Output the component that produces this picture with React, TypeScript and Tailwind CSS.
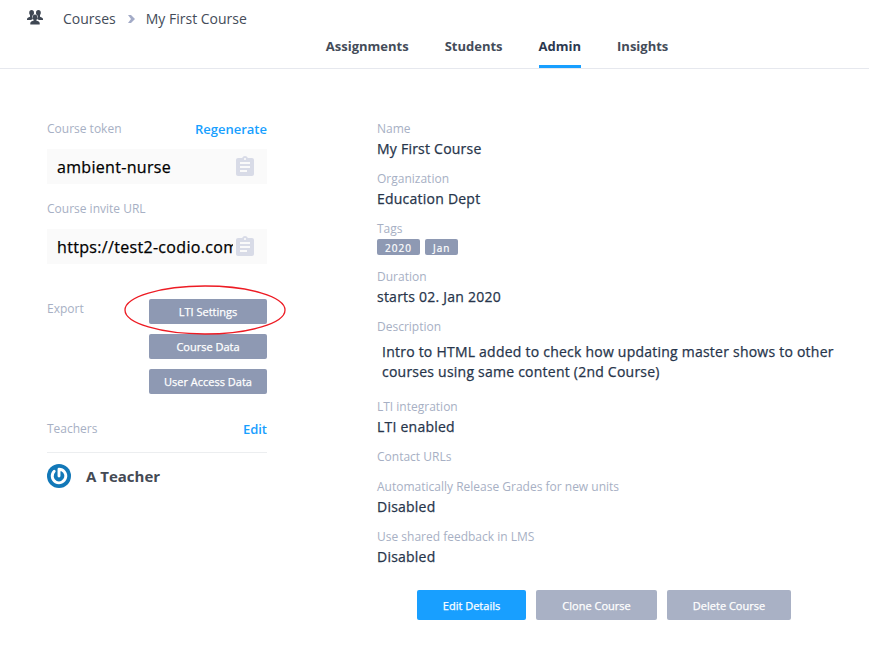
import type { ReactNode } from 'react';
import { MdAssignment } from 'react-icons/md';

const tabs = ['Assignments', 'Students', 'Admin', 'Insights'];

function PeopleIcon() {
  return (
    <svg width="16" height="15" viewBox="0 0 16 15" fill="#3f4753" className="block">
      <ellipse cx="4.6" cy="2.8" rx="2.4" ry="2.700" />
      <ellipse cx="11.4" cy="2.8" rx="2.4" ry="2.700" />
      <path d="M0 10V8.800Q.2 7.500 3 6.700V5h2.600Q4.500 7.500 6 9L4 10Z" />
      <path d="M16 10V8.800q-.2-1.300-3-2.100V5h-2.600q1.100 2.500-.4 4L12 10Z" />
      <ellipse cx="8" cy="7.300" rx="2.300" ry="2.900" />
      <path d="M6.700 8.500h2.600v2q3.200.8 3.400 2.300V14.500H3.300v-1.700q.2-1.500 3.400-2.300Z" />
    </svg>
  );
}

function CopyField({ value }: { value: string }) {
  return (
    <div className="flex h-[35px] w-[220px] items-center bg-[#fafafa] pl-2.5">
      <span className="w-[176px] shrink-0 overflow-hidden whitespace-nowrap text-[16px] leading-6 tracking-[0.32px] text-black [-webkit-text-stroke:0.25px]">{value}</span>
      <MdAssignment className="shrink-0 text-[#d8dbe7]" size={24} />
    </div>
  );
}

function Label({ children }: { children: ReactNode }) {
  return <div className="text-[12px] leading-5 text-[#a7b0c4]">{children}</div>;
}

function Field({ label, children }: { label: string; children?: ReactNode }) {
  return (
    <div className="mb-2.5">
      <Label>{label}</Label>
      {children && <div className="text-[14px] leading-5 tracking-[0.23px] text-[#27354b] [-webkit-text-stroke:0.25px]">{children}</div>}
    </div>
  );
}

export default function App() {
  return (
    <div className="h-[669px] w-[869px] overflow-hidden bg-white font-['Open_Sans',sans-serif]">
      <header className="flex h-[69px] flex-col border-b border-[#e6e8ee]">
        <div className="flex h-9 items-center pl-[27px] text-[14px] text-[#444c59]">
          <div className="-mt-0.5"><PeopleIcon /></div>
          <span className="ml-5">Courses</span>
          <svg width="7" height="8" viewBox="0 0 7 8" className="ml-3 mr-[11px] mt-0.5" fill="#a3abc7">
            <path d="M0 0h3l4 4-4 4H0l3-4Z" />
          </svg>
          <span>My First Course</span>
        </div>
        <nav className="flex h-8 gap-9 pl-[325.8px] text-[13px] font-bold leading-5 text-[#444c59]">
          {tabs.map((tab) => (
            <div key={tab} className={tab === 'Admin' ? 'h-8 border-b-3 border-[#189fff] text-[#2b3850]' : 'h-8'}>{tab}</div>
          ))}
        </nav>
      </header>

      <main className="flex pl-[47px] pt-[50px]">
        <section className="w-[220px] shrink-0">
          <div className="flex justify-between">
            <Label>Course token</Label>
            <span className="text-[13px] font-semibold leading-5 text-[#189fff]">Regenerate</span>
          </div>
          <div className="mt-2.5"><CopyField value="ambient-nurse" /></div>
          <div className="mb-2.5 mt-[15px]"><Label>Course invite URL</Label></div>
          <CopyField value="https://test2-codio.com" />
          <div className="mt-[35px] flex justify-between">
            <Label>Export</Label>
            <div className="relative flex w-[118px] flex-col gap-2.5">
              {['LTI Settings', 'Course Data', 'User Access Data'].map((text) => (
                <button key={text} className="h-[25px] rounded-[2px] bg-[#8e99b3] pt-0.5 text-[11px] text-white [-webkit-text-stroke:0.25px]">{text}</button>
              ))}
              <svg className="pointer-events-none absolute -left-[25px] -top-[14px]" width="162" height="50" viewBox="0 0 162 50" fill="none">
                <ellipse cx="81" cy="25" rx="80" ry="24" stroke="#ed1c24" strokeWidth="1.300" />
              </svg>
            </div>
          </div>
          <div className="mt-[25px] flex h-[34px] justify-between border-b border-[#eceef0]">
            <Label>Teachers</Label>
            <span className="text-[13px] font-semibold leading-5 text-[#189fff]">Edit</span>
          </div>
          <div className="mt-[11px] flex items-center">
            <svg width="24" height="24" viewBox="0 0 24 24" fill="none">
              <circle cx="12" cy="12" r="12" fill="#1278b8" />
              <path d="M7.200 7.200A6.800 6.800 0 1 0 12 5.200V12" stroke="white" strokeWidth="2.900" strokeLinecap="round" strokeLinejoin="round" />
            </svg>
            <span className="ml-[15px] text-[15px] font-bold leading-6 text-[#444a54]">A Teacher</span>
          </div>
        </section>

        <section className="ml-[110px] w-[470px]">
          <Field label="Name">My First Course</Field>
          <Field label="Organization">Education Dept</Field>
          <div className="mb-3">
            <Label>Tags</Label>
            <div className="flex gap-[5px] text-[10px] leading-4 tracking-[1px] text-white [-webkit-text-stroke:0.2px]">
              <span className="h-4 w-[43px] rounded-[2px] bg-[#8e99b3] pl-2 pt-px">2020</span>
              <span className="h-4 w-[33px] rounded-[2px] bg-[#8e99b3] pl-2 pt-px">Jan</span>
            </div>
          </div>
          <Field label="Duration">starts 02. Jan 2020</Field>
          <Field label="Description">
            <div className="px-[5px] py-[5px]">Intro to HTML added to check how updating master shows to other<br />courses using same content (2nd Course)</div>
          </Field>
          <Field label="LTI integration">LTI enabled</Field>
          <Field label="Contact URLs" />
          <Field label="Automatically Release Grades for new units">Disabled</Field>
          <Field label="Use shared feedback in LMS">Disabled</Field>
          <div className="ml-10 mt-[23px] flex gap-2.5 text-[11px] text-white [-webkit-text-stroke:0.25px]">
            <button className="h-[30px] w-[109px] rounded-[2px] bg-[#189fff] pt-0.5">Edit Details</button>
            <button className="h-[30px] w-[121px] rounded-[2px] bg-[#a9b1c5] pt-0.5">Clone Course</button>
            <button className="h-[30px] w-[124px] rounded-[2px] bg-[#a9b1c5] pt-0.5">Delete Course</button>
          </div>
        </section>
      </main>
    </div>
  );
}
